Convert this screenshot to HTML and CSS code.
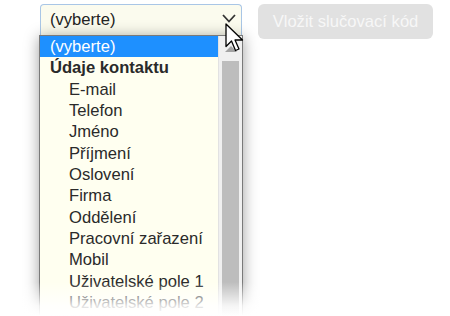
FILE: index.html
```html
<!DOCTYPE html>
<html>
<head>
<meta charset="utf-8">
<link rel="stylesheet" href="styles.css">
</head>
<body>
<div class="wrap">
  <div class="selectcol">
    <div class="select">
      <span class="value">(vyberte)</span>
      <svg class="chev" width="14" height="9" viewBox="0 0 14 9"><path d="M1 1 L7 7.5 L13 1" fill="none" stroke="#333" stroke-width="1.8"/></svg>
    </div>
    <div class="list">
      <div class="items">
        <div class="opt sel">(vyberte)</div>
        <div class="opt grp">Údaje kontaktu</div>
        <div class="opt sub">E-mail</div>
        <div class="opt sub">Telefon</div>
        <div class="opt sub">Jméno</div>
        <div class="opt sub">Příjmení</div>
        <div class="opt sub">Oslovení</div>
        <div class="opt sub">Firma</div>
        <div class="opt sub">Oddělení</div>
        <div class="opt sub">Pracovní zařazení</div>
        <div class="opt sub">Mobil</div>
        <div class="opt sub">Uživatelské pole 1</div>
        <div class="opt sub">Uživatelské pole 2</div>
      </div>
      <div class="scroll">
        <svg class="up" width="12" height="8" viewBox="0 0 12 8"><path d="M0 7 L6 1 L12 7 Z" fill="#a3a3a3"/></svg>
        <div class="thumb"></div>
      </div>
    </div>
    <svg class="cursor" width="20" height="30" viewBox="0 0 20 30"><path d="M1 1 L1 23.5 L6.5 18 L10.5 27.5 L14 26 L10 17 L17.5 17 Z" fill="#fff" stroke="#000" stroke-width="1.3" stroke-linejoin="round"/></svg>
  </div>
  <button class="btn">Vložit slučovací kód</button>
</div>
<div class="fade"></div>
</body>
</html>
```
FILE: styles.css
```css
html, body {
  margin: 0;
  padding: 0;
  background: #fff;
  overflow: hidden;
  height: 316px;
}
body {
  font-family: "Liberation Sans", Arial, sans-serif;
  font-size: 16.6px;
  color: #222;
  position: relative;
}
.wrap {
  display: flex;
  align-items: flex-start;
  gap: 15px;
  padding: 4px 0 0 39px;
}
.selectcol {
  width: 204px;
  position: relative;
}
.select {
  height: 31px;
  margin-left: 1px;
  margin-right: 1px;
  border: 1px solid #a9c6e6;
  border-bottom: none;
  border-radius: 4px 4px 0 0;
  background: #fbfbee;
  display: flex;
  align-items: center;
  justify-content: space-between;
  padding: 0 5px 0 9px;
  box-sizing: border-box;
}
.value {
  color: #222;
}
.chev {
  margin-top: -4px;
}
.list {
  display: flex;
  border: 1px solid #7a7a7a;
  border-bottom: none;
  background: #fffff0;
  box-shadow: 0 2px 14px rgba(0,0,0,0.38);
  height: 279px;
  overflow: hidden;
}
.items {
  width: 178px;
}
.opt {
  height: 21.33px;
  line-height: 21.33px;
  white-space: nowrap;
  color: #2a2a2a;
}
.sel {
  background: #1e90ff;
  color: #fff;
  padding-left: 10px;
}
.grp {
  font-weight: bold;
  padding-left: 10px;
}
.sub {
  padding-left: 29px;
}
.scroll {
  width: 23px;
  background: #f0f0f0;
  border-left: 1px solid #e2e2e2;
  display: flex;
  flex-direction: column;
  align-items: center;
}
.up {
  margin-top: 9px;
}
.thumb {
  margin-top: 8px;
  width: 17px;
  flex: 1;
  background: #bdbdbd;
}
.cursor {
  position: absolute;
  left: 186px;
  top: 19px;
}
.btn {
  width: 175px;
  height: 35px;
  border: none;
  border-radius: 6px;
  background: #e1e1e1;
  color: #f7f7f7;
  font-family: "Liberation Sans", Arial, sans-serif;
  font-size: 16.6px;
  padding: 0;
}
.fade {
  position: absolute;
  left: 0;
  right: 0;
  top: 282px;
  height: 34px;
  background: linear-gradient(to bottom, rgba(255,255,255,0) 0%, rgba(255,255,255,0.85) 70%, #fff 100%);
}
```
